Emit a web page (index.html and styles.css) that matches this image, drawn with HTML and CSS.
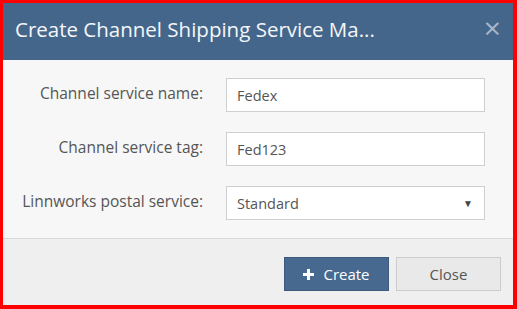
FILE: index.html
```html
<!DOCTYPE html>
<html lang="en">
<head>
    <meta charset="UTF-8">
    <title>Create Channel Shipping Service Mapping</title>
    <link rel="stylesheet" href="styles.css">
</head>
<body>
    <div class="modal">
        <div class="modal-header">
            <h1>Create Channel Shipping Service Ma...</h1>
            <span class="close-x">&times;</span>
        </div>
        <div class="modal-body">
            <div class="form-row">
                <label>Channel service name:</label>
                <div class="field">Fedex</div>
            </div>
            <div class="form-row">
                <label>Channel service tag:</label>
                <div class="field">Fed123</div>
            </div>
            <div class="form-row">
                <label>Linnworks postal service:</label>
                <div class="field select">Standard <span class="caret">&#9660;</span></div>
            </div>
        </div>
        <div class="modal-footer">
            <button class="btn btn-primary">
                <svg class="plus" width="11" height="11" viewBox="0 0 11 11"><path d="M4 0h3v4h4v3H7v4H4V7H0V4h4z" fill="#ffffff"/></svg>
                Create
            </button>
            <button class="btn btn-default">Close</button>
        </div>
    </div>
</body>
</html>
```

FILE: styles.css
```css
body {
    margin: 0;
    padding: 0;
    width: 517px;
    height: 309px;
    font-family: "Open Sans", "Liberation Sans", sans-serif;
    background-color: #ff0000;
}
.modal {
    box-sizing: border-box;
    margin: 3px 4px 4px 3px;
    height: 302px;
    display: flex;
    flex-direction: column;
    background-color: #f7f7f7;
}
.modal-header {
    height: 57px;
    background-color: #45668b;
    display: flex;
    align-items: center;
    justify-content: space-between;
    padding: 0 12px 0 12px;
}
.modal-header h1 {
    margin: 0;
    font-size: 20.5px;
    font-weight: normal;
    color: #f4f6f9;
    padding-bottom: 6px;
}
.close-x {
    font-size: 30px;
    color: #a9b7c8;
    line-height: 1;
    padding-bottom: 8px;
}
.modal-body {
    height: 179px;
    box-sizing: border-box;
    padding-top: 18px;
    display: flex;
    flex-direction: column;
    gap: 20px;
    border-bottom: 1px solid #dadada;
}
.form-row {
    display: flex;
    align-items: center;
}
.form-row label {
    width: 200px;
    text-align: right;
    font-size: 15.5px;
    color: #555555;
    padding-right: 23px;
    padding-bottom: 4px;
}
.field {
    box-sizing: border-box;
    width: 259px;
    height: 34px;
    border: 1px solid #cfcfcf;
    background-color: #ffffff;
    font-size: 14.5px;
    color: #555555;
    padding: 0 10px;
    display: flex;
    align-items: center;
}
.select {
    justify-content: space-between;
}
.caret {
    font-size: 10px;
    color: #444444;
    padding-right: 1px;
}
.modal-footer {
    flex: 1;
    background-color: #efefef;
    display: flex;
    justify-content: flex-end;
    align-items: flex-start;
    padding: 18px 12px 0 0;
    gap: 7px;
}
.btn {
    width: 105px;
    height: 34px;
    font-family: "Open Sans", "Liberation Sans", sans-serif;
    font-size: 15px;
    border: 1px solid;
    cursor: pointer;
    display: flex;
    align-items: center;
    justify-content: center;
}
.btn-primary {
    background-color: #47698f;
    border-color: #3b5a7d;
    color: #ffffff;
}
.plus {
    margin-right: 9px;
}
.btn-default {
    background-color: #e9e9e9;
    border-color: #cccccc;
    color: #555555;
}
```
